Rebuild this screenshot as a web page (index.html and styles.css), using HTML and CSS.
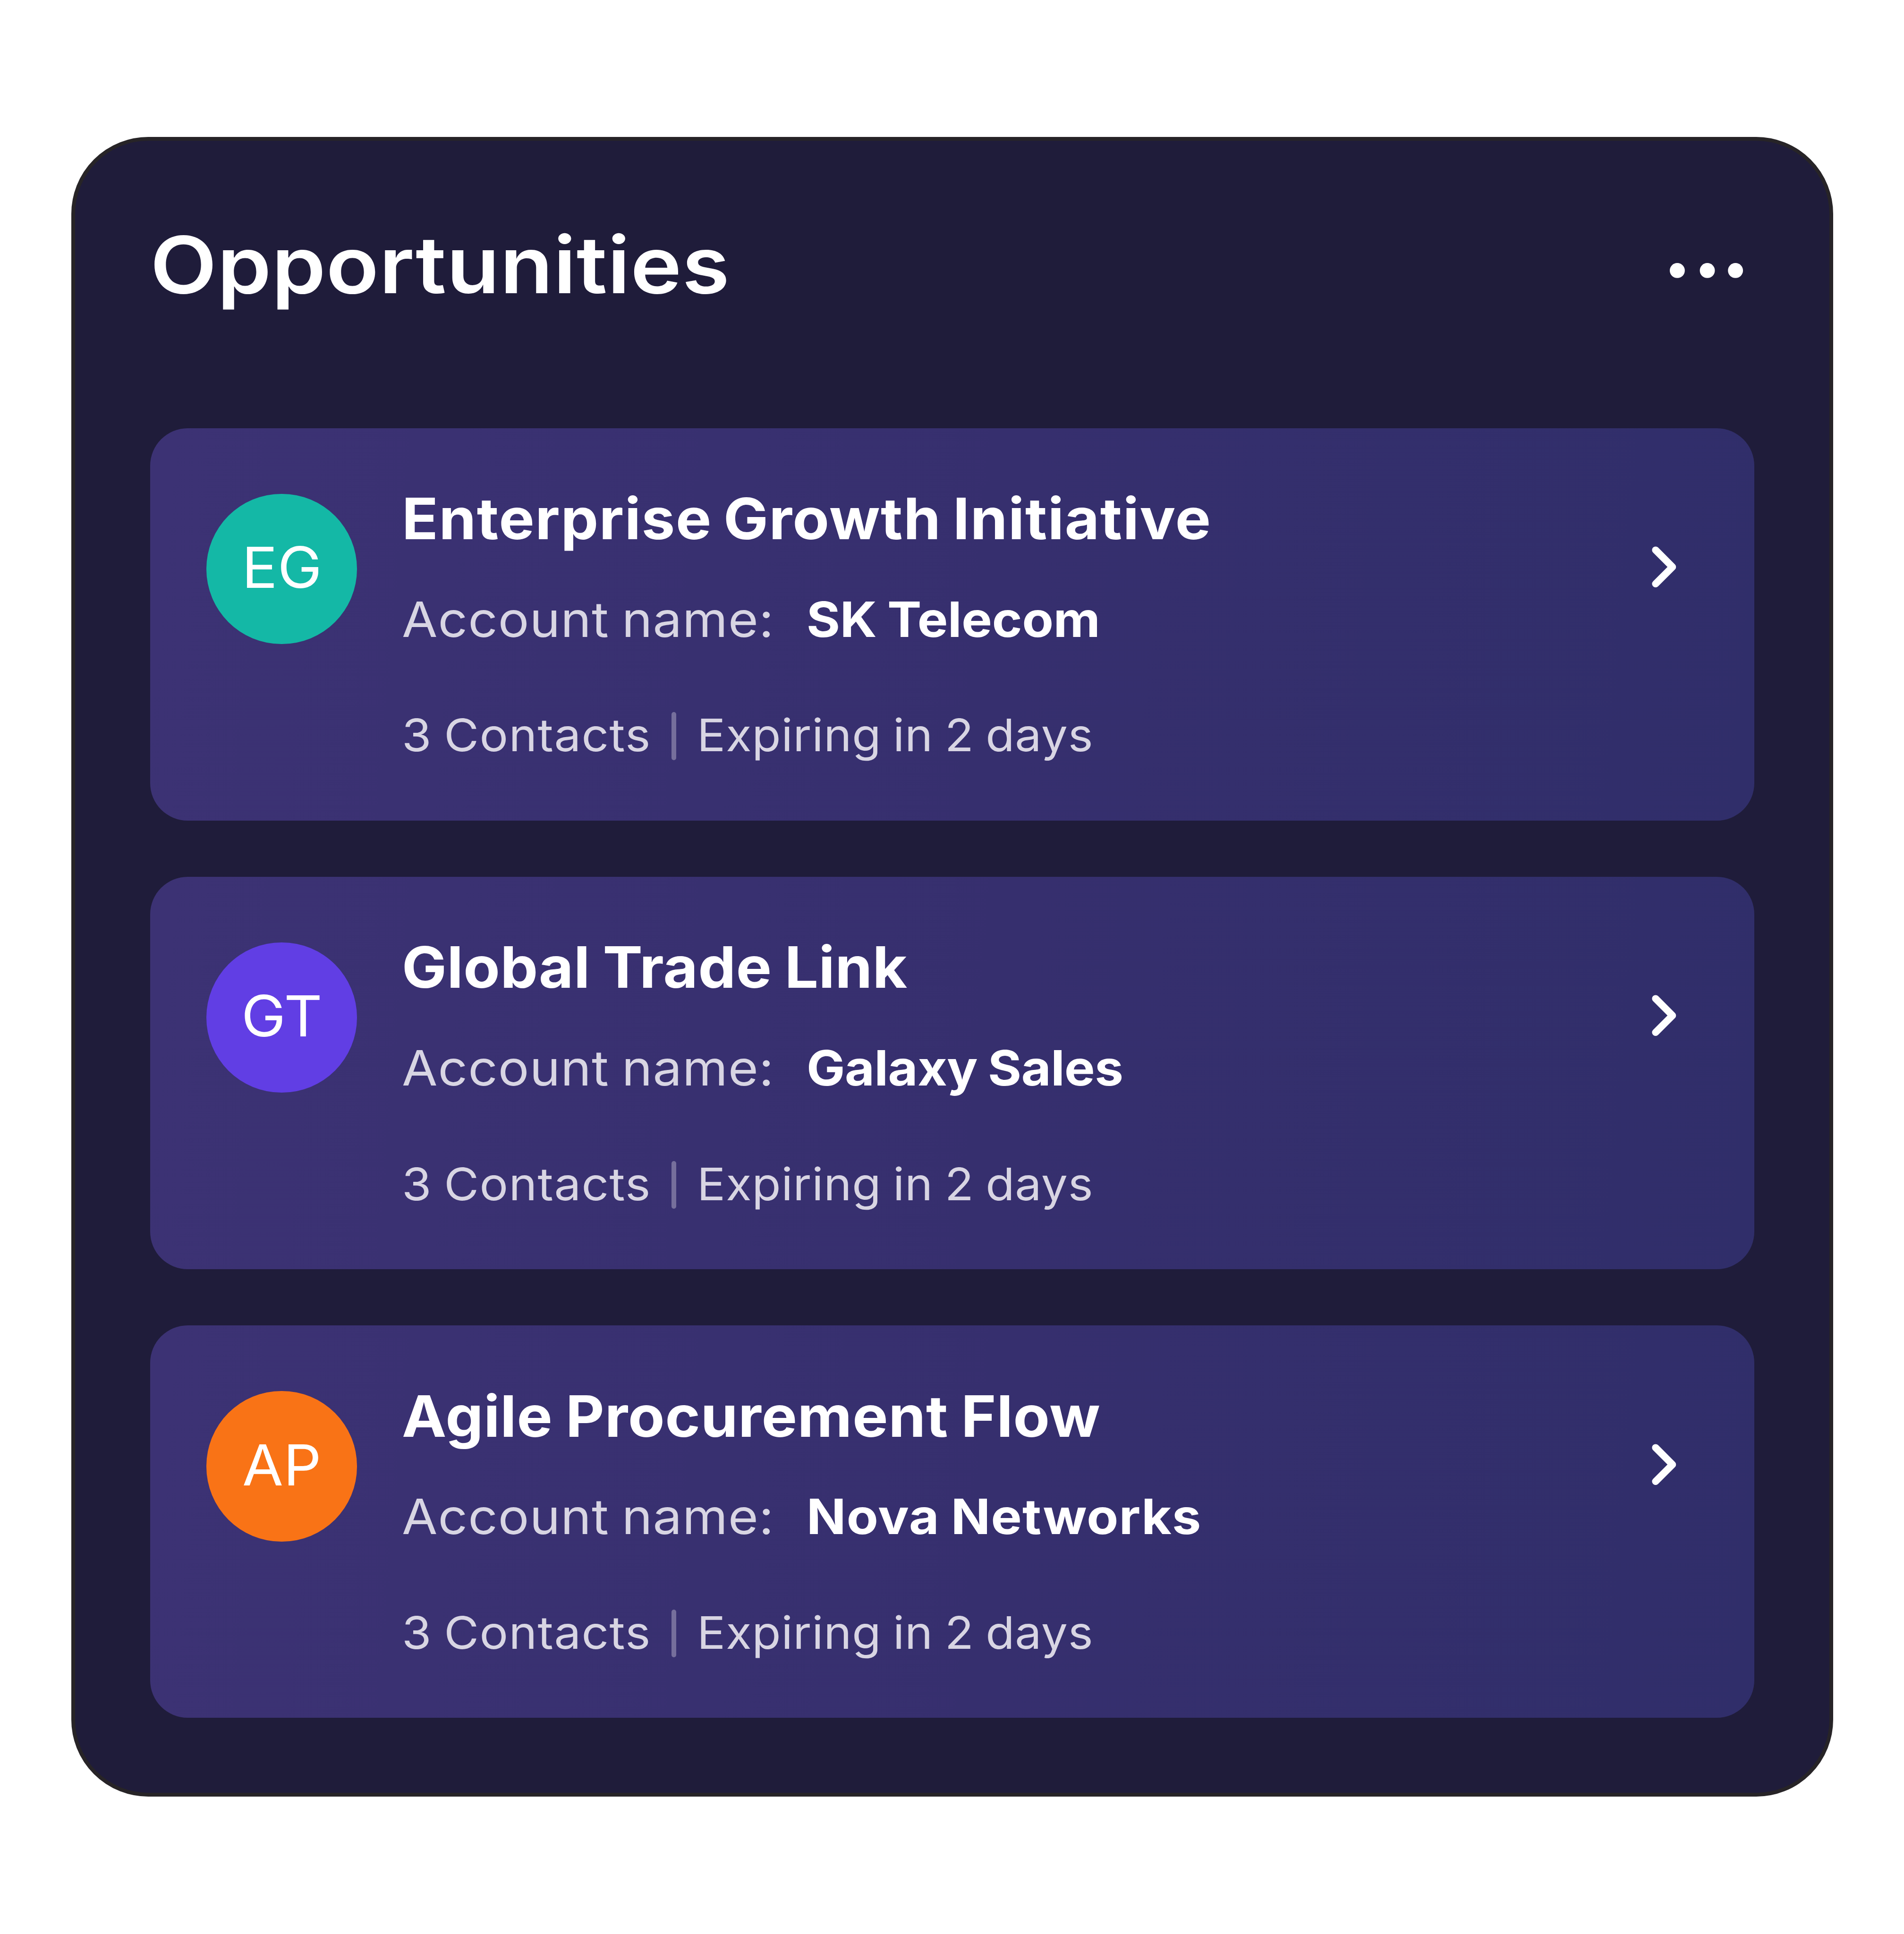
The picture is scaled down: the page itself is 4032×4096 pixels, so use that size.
FILE: index.html
```html
<!DOCTYPE html>
<html lang="en">
<head>
  <meta charset="utf-8">
  <title>Opportunities</title>
  <link rel="stylesheet" href="styles.css">
</head>
<body>
  <div class="card">
    <div class="card-header">
      <h1>Opportunities</h1>
      <svg class="dots" viewBox="0 0 39 8">
        <circle cx="4" cy="4" r="4"/>
        <circle cx="20" cy="4" r="4"/>
        <circle cx="35" cy="4" r="4"/>
      </svg>
    </div>

    <div class="list">
      <div class="item">
        <div class="avatar teal"><span>EG</span></div>
        <div class="info">
          <h2 class="title-eg">Enterprise Growth Initiative</h2>
          <div class="account"><span class="label">Account name:</span><b class="name-eg">SK Telecom</b></div>
          <div class="meta"><span class="contacts">3 Contacts</span><i class="divider"></i><span class="expiring">Expiring in 2 days</span></div>
        </div>
        <svg class="chevron" viewBox="0 0 13 22"><path d="M2 2l9 9-9 9"/></svg>
      </div>

      <div class="item">
        <div class="avatar purple"><span>GT</span></div>
        <div class="info">
          <h2 class="title-gt">Global Trade Link</h2>
          <div class="account"><span class="label">Account name:</span><b class="name-gt">Galaxy Sales</b></div>
          <div class="meta"><span class="contacts">3 Contacts</span><i class="divider"></i><span class="expiring">Expiring in 2 days</span></div>
        </div>
        <svg class="chevron" viewBox="0 0 13 22"><path d="M2 2l9 9-9 9"/></svg>
      </div>

      <div class="item">
        <div class="avatar orange"><span>AP</span></div>
        <div class="info">
          <h2 class="title-ap">Agile Procurement Flow</h2>
          <div class="account"><span class="label">Account name:</span><b class="name-ap">Nova Networks</b></div>
          <div class="meta"><span class="contacts">3 Contacts</span><i class="divider"></i><span class="expiring">Expiring in 2 days</span></div>
        </div>
        <svg class="chevron" viewBox="0 0 13 22"><path d="M2 2l9 9-9 9"/></svg>
      </div>
    </div>
  </div>
</body>
</html>
```
FILE: styles.css
```css
/* the layout is 1014 units wide, 1rem = 1 unit */
html {
  font-size: calc(100vw / 1014);
}

* {
  box-sizing: border-box;
}

body {
  margin: 0;
  padding: 73rem 37.8rem 73rem 38rem;
  background-color: white;
  color: white;
  font-family: Inter, "Liberation Sans", sans-serif;
  overflow: hidden;
}

.card {
  height: 884rem;
  padding: 41rem 40rem 40rem;
  background-color: #1f1c3a;
  border: 2.02rem solid #272427;
  border-radius: 41rem;
}

.card-header {
  display: flex;
  justify-content: space-between;
  height: 50rem;
  margin-bottom: 62rem;
}

h1 {
  margin: 0;
  font-size: 42rem;
  font-weight: 600;
  line-height: 50rem;
  letter-spacing: 0.16rem;
}

/* slightly extended letters */
h1,
h2,
.account span,
.account b,
.meta span {
  transform: scaleX(1.05);
  transform-origin: left;
}

h1 {
  transform: scaleX(1.1);
}

.avatar span {
  transform: scaleX(1.05);
}

.dots {
  width: 39rem;
  height: 8rem;
  margin: 24rem 6rem 0 0;
  fill: white;
}

.list {
  display: flex;
  flex-direction: column;
  gap: 30rem;
}

.item {
  display: flex;
  align-items: flex-start;
  height: 209rem;
  padding: 30rem 41.4rem 0 30rem;
  border-radius: 20rem;
  background: linear-gradient(95deg, #3c3274, #362f6e 53%, #302e6a);
}

.avatar {
  display: flex;
  align-items: center;
  justify-content: center;
  width: 80rem;
  height: 80rem;
  margin: 5rem 24rem 0 0;
  padding-bottom: 1.6rem;
  border-radius: 50%;
  font-size: 30.2rem;
}

.teal {
  background-color: #14b8a6;
}

.purple {
  background-color: #613ee4;
}

.orange {
  background-color: #f97316;
}

.info {
  flex: 1;
  margin-top: 0.3rem;
}

h2 {
  margin: 0 0 19.5rem;
  font-size: 30.3rem;
  font-weight: 700;
  line-height: 36rem;
  word-spacing: -0.9rem;
  white-space: nowrap;
}

.title-eg {
  letter-spacing: 0.38rem;
  word-spacing: -1.8rem;
}

.title-gt {
  letter-spacing: 0.13rem;
}

.title-ap {
  letter-spacing: 0.21rem;
}

.account {
  display: flex;
  height: 32rem;
  margin-bottom: 31.8rem;
  font-size: 26rem;
  line-height: 32rem;
  word-spacing: -0.8rem;
  white-space: nowrap;
}

.account .label {
  width: 215.5rem;
  color: #d8d5e3;
  letter-spacing: 0.24rem;
  word-spacing: -1.2rem;
  transform: scaleX(1.06);
}

.name-eg {
  letter-spacing: -0.05rem;
}

.name-gt {
  letter-spacing: -0.12rem;
}

.account .name-ap {
  letter-spacing: 0.29rem;
  transform: scaleX(1.06);
}

.meta {
  display: flex;
  align-items: center;
  height: 28rem;
  color: #d8d5e3;
  font-size: 24rem;
  line-height: 28rem;
  white-space: nowrap;
}

.meta .contacts {
  width: 143.7rem;
  letter-spacing: 0.31rem;
  word-spacing: -1rem;
  transform: scaleX(1.06);
}

.divider {
  width: 2.5rem;
  height: 25.5rem;
  margin: 1rem 11rem 0 0;
  border-radius: 2rem;
  background-color: #766f9c;
}

.expiring {
  letter-spacing: 0.17rem;
  word-spacing: -1rem;
}

.chevron {
  width: 13rem;
  height: 22rem;
  margin-top: 33rem;
  fill: none;
  stroke: white;
  stroke-width: 3.8;
  stroke-linecap: round;
  stroke-linejoin: round;
}
```
